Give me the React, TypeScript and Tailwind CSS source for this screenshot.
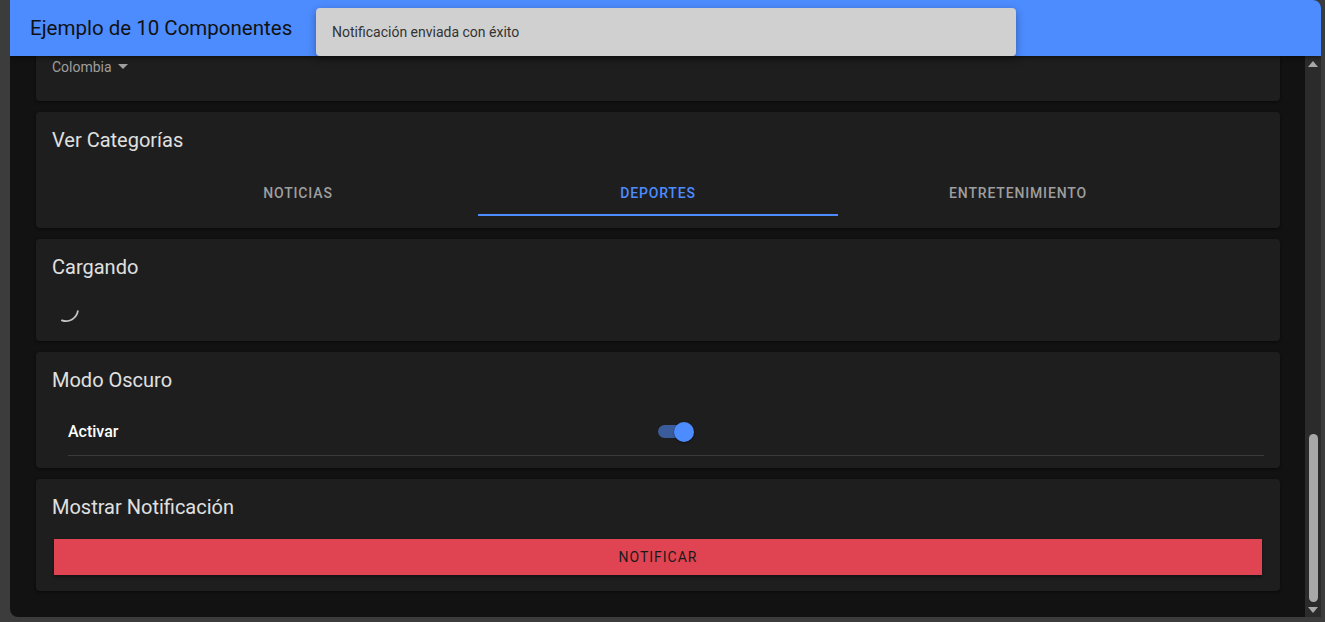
import { ReactNode } from 'react';

function Card({ title, children, className = '' }: { title?: string; children: ReactNode; className?: string }) {
  return (
    <section className={`bg-[#1e1e1e] rounded shadow-[0_1px_3px_rgba(0,0,0,0.5)] px-4 ${className}`}>
      {title && <h2 className="pt-4 text-[20px] leading-6 text-[#e0e0e0]">{title}</h2>}
      {children}
    </section>
  );
}

const tabs = ['Noticias', 'Deportes', 'Entretenimiento'];

export default function App() {
  const active = 1;

  return (
    <div className="h-[622px] w-[1325px] bg-[#3c3c3c] pl-[10px] pr-[4px] pb-[5px] font-['Roboto',sans-serif] overflow-hidden">
      <div className="relative h-full flex flex-col bg-[#121212] rounded-tr-lg rounded-bl-lg overflow-hidden">
        {/* Header */}
        <header className="h-14 shrink-0 bg-[#4d8cff] flex items-center pl-5 shadow-[0_2px_4px_rgba(0,0,0,0.4)] z-10">
          <h1 className="text-[20.5px] text-[#111111]">Ejemplo de 10 Componentes</h1>
        </header>

        {/* Toast */}
        <div className="absolute left-[306px] top-2 w-[700px] h-12 bg-[#d0d0d0] rounded flex items-center px-4 text-sm text-[#333333] shadow-[0_3px_8px_rgba(0,0,0,0.35)] z-20">
          Notificación enviada con éxito
        </div>

        <div className="flex-1 flex min-h-0">
          {/* Content */}
          <main className="flex-1 pl-[26px] pr-[25px] flex flex-col gap-[11px] overflow-hidden">
            <Card className="h-[45px] rounded-t-none pt-[3px]">
              <div className="flex items-center gap-1 text-sm text-[#9e9e9e] h-4">
                Colombia
                <svg width="10" height="6" viewBox="0 0 10 6" className="ml-[2px]">
                  <path d="M0 0h10L5 5z" fill="#9e9e9e" />
                </svg>
              </div>
            </Card>

            <Card title="Ver Categorías" className="pb-3">
              <div className="mt-4 flex justify-center">
                {tabs.map((t, i) => (
                  <div
                    key={t}
                    className={`w-[360px] h-12 pt-[3px] flex items-center justify-center text-sm font-medium uppercase tracking-[0.06em] border-b-2 ${
                      i === active ? 'text-[#4d8cff] border-[#4d8cff]' : 'text-[#9e9e9e] border-transparent'
                    }`}
                  >
                    {t}
                  </div>
                ))}
              </div>
            </Card>

            <Card title="Cargando" className="h-[102px]">
              <div className="mt-[16px]">
                <svg width="28" height="28" viewBox="0 0 28 28">
                  <path d="M26 13 A12 12 0 0 1 13 26" fill="none" stroke="#c4c4c4" strokeWidth="1.8" strokeLinecap="round" transform="rotate(15 14 14)" />
                </svg>
              </div>
            </Card>

            <Card title="Modo Oscuro" className="pb-3">
              <div className="mt-4 ml-4 flex items-center h-12 border-b border-[#3a3a3a]">
                <span className="w-[590px] text-base font-medium text-white">Activar</span>
                <div className="relative w-9 h-5 flex items-center">
                  <div className="w-[32px] h-[13px] rounded-full bg-[#3b5c9b]" />
                  <div className="absolute left-4 top-0 w-5 h-5 rounded-full bg-[#4d8cff] shadow-[0_1px_2px_rgba(0,0,0,0.5)]" />
                </div>
              </div>
            </Card>

            <Card title="Mostrar Notificación" className="pb-4">
              <button className="mt-5 mx-[2px] w-[calc(100%-4px)] h-9 bg-[#e04452] text-sm tracking-[0.07em] text-[#1a1a1a] uppercase shadow-[0_2px_3px_rgba(0,0,0,0.4)]">
                Notificar
              </button>
            </Card>
          </main>

          {/* Scrollbar */}
          <div className="w-4 shrink-0 bg-[#2b2b2b] flex flex-col items-center">
            <svg width="10" height="6" viewBox="0 0 10 6" className="mt-[5px]">
              <path d="M0 6h10L5 0z" fill="#a8a8a8" />
            </svg>
            <div className="flex-1" />
            <div className="w-[9px] h-[168px] rounded-full bg-[#a8a8a8]" />
            <svg width="10" height="6" viewBox="0 0 10 6" className="mt-[5px] mb-[4px]">
              <path d="M0 0h10L5 6z" fill="#a8a8a8" />
            </svg>
          </div>
        </div>
      </div>
    </div>
  );
}
